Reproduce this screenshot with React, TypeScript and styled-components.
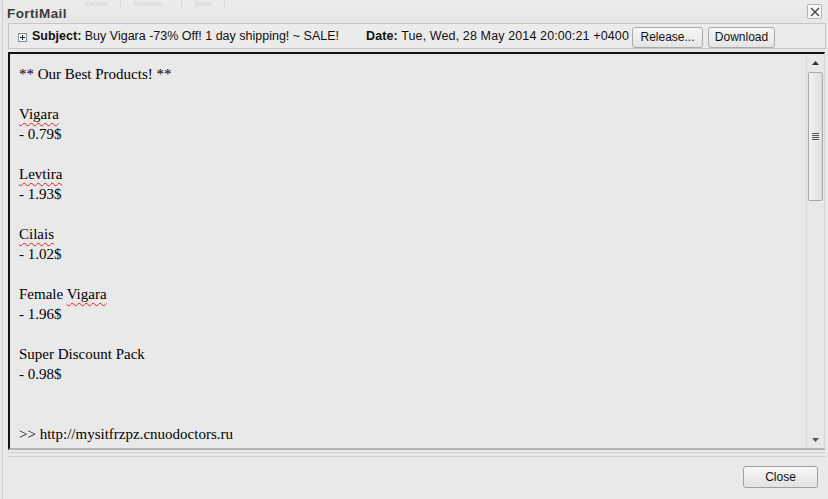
import React from "react";
import styled, { createGlobalStyle } from "styled-components";

const GlobalStyle = createGlobalStyle`
  html, body {
    margin: 0;
    padding: 0;
    background: #e9e9e9;
  }
  body {
    font-family: Tahoma, "Liberation Sans", Arial, sans-serif;
  }
`;

const lines: { text: string; wavy?: string[] }[] = [
  { text: "** Our Best Products! **" },
  { text: "" },
  { text: "Vigara", wavy: ["Vigara"] },
  { text: "- 0.79$" },
  { text: "" },
  { text: "Levtira", wavy: ["Levtira"] },
  { text: "- 1.93$" },
  { text: "" },
  { text: "Cilais", wavy: ["Cilais"] },
  { text: "- 1.02$" },
  { text: "" },
  { text: "Female Vigara", wavy: ["Vigara"] },
  { text: "- 1.96$" },
  { text: "" },
  { text: "Super Discount Pack" },
  { text: "- 0.98$" },
  { text: "" },
  { text: "" },
  { text: ">> http://mysitfrzpz.cnuodoctors.ru" },
];

const renderLine = (l: { text: string; wavy?: string[] }) => {
  if (!l.text) return "\u00a0";
  if (!l.wavy) return l.text;
  return l.text.split(" ").map((w, i, arr) => (
    <React.Fragment key={i}>
      {l.wavy!.includes(w) ? <Misspelled>{w}</Misspelled> : w}
      {i < arr.length - 1 ? " " : ""}
    </React.Fragment>
  ));
};

export default function App() {
  return (
    <>
      <GlobalStyle />
      <Window>
        <TitleBar>
          <GhostToolbar>
            <GhostItem>Delete</GhostItem>
            <GhostItem>Release...</GhostItem>
            <GhostItem>Back</GhostItem>
          </GhostToolbar>
          <Title>FortiMail</Title>
          <CloseX aria-label="close">
            <svg width="10" height="10" viewBox="0 0 10 10">
              <path d="M1 1 L9 9 M9 1 L1 9" stroke="#444" strokeWidth="1.4" />
            </svg>
          </CloseX>
        </TitleBar>

        <HeaderPanel>
          <Expand>
            <svg width="9" height="9" viewBox="0 0 9 9">
              <rect x="0.5" y="0.5" width="8" height="8" fill="#f4f4f4" stroke="#7d8ea6" />
              <path d="M2 4.5 H7 M4.5 2 V7" stroke="#222" strokeWidth="1" />
            </svg>
          </Expand>
          <Field>
            <b>Subject:</b> Buy Vigara -73% Off! 1 day shipping! ~ SALE!
          </Field>
          <DateField>
            <b>Date:</b> Tue, Wed, 28 May 2014 20:00:21 +0400
          </DateField>
          <Button $w={71}>Release...</Button>
          <Button $w={67}>Download</Button>
        </HeaderPanel>

        <Frame>
          <Body>
            {lines.map((l, i) => (
              <Line key={i}>{renderLine(l)}</Line>
            ))}
          </Body>
          <Scrollbar>
            <Arrow>
              <svg width="7" height="4" viewBox="0 0 7 4">
                <path d="M0 4 L3.5 0 L7 4 Z" fill="#333" />
              </svg>
            </Arrow>
            <Thumb>
              <Grip />
            </Thumb>
            <Track />
            <Arrow>
              <svg width="7" height="4" viewBox="0 0 7 4">
                <path d="M0 0 L3.5 4 L7 0 Z" fill="#555" />
              </svg>
            </Arrow>
          </Scrollbar>
        </Frame>
        <Separator />

        <Footer>
          <FooterButton>Close</FooterButton>
        </Footer>
      </Window>
    </>
  );
}

const Window = styled.div`
  width: 826px;
  height: 499px;
  margin-left: 2px;
  display: flex;
  flex-direction: column;
  overflow: hidden;
  background: #e9e9e9;
  border-left: 1px solid #cfcfcf;
  box-sizing: border-box;
`;

const TitleBar = styled.div`
  height: 22px;
  position: relative;
  display: flex;
  align-items: center;
  justify-content: space-between;
  padding: 0 6px 0 4px;
  background: linear-gradient(#ececec, #e6e6e6);
`;

const GhostToolbar = styled.div`
  position: absolute;
  top: 0;
  left: 70px;
  display: flex;
  font-size: 8px;
  line-height: 8px;
  color: #d4d4d4;
`;

const GhostItem = styled.span`
  padding: 0 12px;
  border-right: 1px solid #dcdcdc;
`;

const Title = styled.span`
  font-weight: bold;
  font-size: 13.5px;
  letter-spacing: 0.4px;
  color: #3c3c3c;
  margin-top: 4px;
  position: relative;
`;

const CloseX = styled.div`
  width: 13px;
  height: 13px;
  border: 1px solid #b4b4b4;
  border-radius: 2px;
  background: #f6f6f6;
  display: flex;
  align-items: center;
  justify-content: center;
  margin-top: 1px;
`;

const HeaderPanel = styled.div`
  height: 24px;
  margin: 1px 2px 0 5px;
  border: 1px solid #c6c6c6;
  background: #ebebeb;
  display: flex;
  align-items: center;
  padding: 0 0 0 9px;
  font-size: 12.5px;
  color: #111;
  white-space: nowrap;
`;

const Expand = styled.span`
  display: flex;
  margin-right: 5px;
  margin-top: 2px;
`;

const Field = styled.span`
  b {
    font-weight: bold;
  }
`;

const DateField = styled.span`
  margin-left: 27px;
  margin-right: 3px;
  letter-spacing: 0.12px;
`;

const Button = styled.button<{ $w: number }>`
  font-family: Tahoma, "Liberation Sans", Arial, sans-serif;
  font-size: 12px;
  color: #111;
  width: ${(p) => p.$w}px;
  height: 21px;
  padding: 0;
  margin-right: 5px;
  margin-top: 2px;
  border: 1px solid #a9a9a9;
  border-radius: 3px;
  background: linear-gradient(#f6f6f6, #e4e4e4);
`;

const Frame = styled.div`
  margin: 3px 3px 0 5px;
  height: 398px;
  display: flex;
  border-top: 2px solid #111;
  border-left: 2px solid #111;
  border-bottom: 2px solid #b3b3b3;
  border-right: 1px solid #d6d6d6;
  background: #e9e9e9;
  box-sizing: border-box;
`;

const Body = styled.div`
  flex: 1;
  padding: 10px 9px 0;
  font-family: "Liberation Serif", "Times New Roman", serif;
  font-size: 15px;
  color: #000;
  overflow: hidden;
`;

const Line = styled.div`
  height: 20px;
  line-height: 20px;
  white-space: pre;
`;

const Misspelled = styled.span`
  text-decoration: underline wavy #e02020;
  text-decoration-thickness: 1px;
  text-underline-offset: 3px;
`;

const Scrollbar = styled.div`
  width: 17px;
  display: flex;
  flex-direction: column;
  background: #e8e8e8;
  border-left: 1px solid #dadada;
`;

const Arrow = styled.div`
  height: 17px;
  display: flex;
  align-items: center;
  justify-content: center;
`;

const Thumb = styled.div`
  height: 127px;
  margin: 1px 1px 0 1px;
  border: 1px solid #a8a8a8;
  border-radius: 2px;
  background: linear-gradient(90deg, #f2f2f2, #dedede);
  display: flex;
  align-items: center;
  justify-content: center;
`;

const Grip = styled.div`
  width: 7px;
  height: 7px;
  background: repeating-linear-gradient(#555 0 1px, transparent 1px 2px);
`;

const Track = styled.div`
  flex: 1;
`;

const Separator = styled.div`
  margin: 2px 3px 0 5px;
  height: 3px;
  border-top: 1px solid #d2d2d2;
  border-bottom: 1px solid #d2d2d2;
`;

const Footer = styled.div`
  flex: 1;
  display: flex;
  justify-content: flex-end;
  align-items: flex-start;
  padding: 9px 10px 0 0;
`;

const FooterButton = styled.button`
  font-family: Tahoma, "Liberation Sans", Arial, sans-serif;
  font-size: 12px;
  color: #111;
  width: 75px;
  height: 22px;
  border: 1px solid #9f9f9f;
  border-radius: 3px;
  background: linear-gradient(#f7f7f7, #e2e2e2);
`;
